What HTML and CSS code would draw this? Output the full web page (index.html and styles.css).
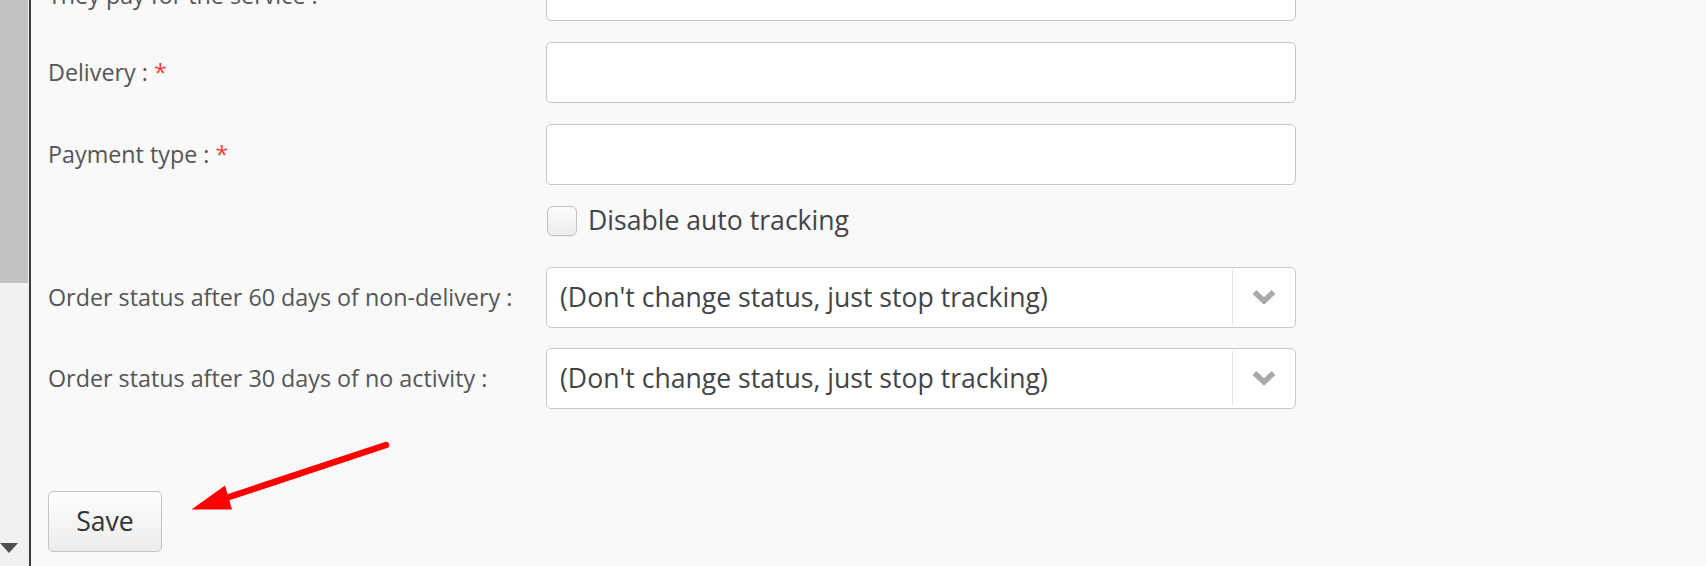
FILE: index.html
```html
<!DOCTYPE html>
<html lang="en">
<head>
<meta charset="utf-8">
<title>Tracking settings</title>
<link rel="stylesheet" href="styles.css">
</head>
<body>
<div class="page">
  <div class="scrollbar">
    <div class="thumb"></div>
    <div class="track"></div>
    <div class="down-arrow"></div>
  </div>
  <main class="content">
    <form class="form">
      <div class="row">
        <label class="label label-first">They pay for the service :</label>
        <input class="field" type="text">
      </div>
      <div class="row">
        <label class="label">Delivery : <span class="req">*</span></label>
        <input class="field" type="text">
      </div>
      <div class="row">
        <label class="label">Payment type : <span class="req">*</span></label>
        <input class="field" type="text">
      </div>
      <div class="row check-row">
        <span class="checkbox"></span>
        <span class="check-label">Disable auto tracking</span>
      </div>
      <div class="row select-row">
        <label class="label">Order status after 60 days of non-delivery :</label>
        <div class="select">
          <span class="select-text">(Don't change status, just stop tracking)</span>
          <span class="select-btn"><svg width="24" height="16" viewBox="0 0 24 16"><polyline points="2.5,3 12,12 21.5,3" fill="none" stroke="#a9a9a9" stroke-width="5.5"/></svg></span>
        </div>
      </div>
      <div class="row select-row">
        <label class="label">Order status after 30 days of no activity :</label>
        <div class="select">
          <span class="select-text">(Don't change status, just stop tracking)</span>
          <span class="select-btn"><svg width="24" height="16" viewBox="0 0 24 16"><polyline points="2.5,3 12,12 21.5,3" fill="none" stroke="#a9a9a9" stroke-width="5.5"/></svg></span>
        </div>
      </div>
      <div class="actions">
        <button class="save" type="button">Save</button>
      </div>
    </form>
  </main>
  <svg class="annotation" width="1706" height="566" viewBox="0 0 1706 566">
    <line x1="386" y1="445" x2="226" y2="498" stroke="#ff0000" stroke-width="6.5" stroke-linecap="round"/>
    <polygon points="191.5,509.5 225,485.5 232,509.5" fill="#ff0000"/>
  </svg>
</div>
</body>
</html>
```
FILE: styles.css
```css
html, body {
  margin: 0;
  padding: 0;
}
body {
  background: #f9f9f9;
  font-family: "Open Sans", "DejaVu Sans", sans-serif;
  overflow: hidden;
}
.page {
  position: relative;
  display: flex;
  height: 566px;
  width: 1706px;
  overflow: hidden;
}
.scrollbar {
  width: 29px;
  flex: none;
  display: flex;
  flex-direction: column;
  background: #f1f1f1;
  border-right: 2px solid #3a3a3a;
}
.thumb {
  height: 283px;
  width: 28px;
  background: #c1c1c1;
}
.track {
  flex: 1;
}
.down-arrow {
  width: 0;
  height: 0;
  margin: 0 0 13px 0;
  border-left: 9.5px solid transparent;
  border-right: 9.5px solid transparent;
  border-top: 10px solid #505050;
}
.content {
  flex: 1;
  padding-left: 17px;
}
.form {
  margin: -40px 0 0 0;
  display: flex;
  flex-direction: column;
}
.row {
  display: flex;
  align-items: center;
  margin-bottom: 21px;
}
.label {
  width: 498px;
  flex: none;
  font-size: 23.3px;
  color: #555;
  line-height: 1.3;
}
.label-first {
  padding-top: 10px;
}
.req {
  color: #ef3f35;
}
.field {
  width: 750px;
  height: 61px;
  box-sizing: border-box;
  border: 1px solid #c6c6c6;
  border-radius: 5px;
  background: #fff;
  margin: 0;
  padding: 0 14px;
  font-family: inherit;
  font-size: 26.6px;
}
.check-row {
  padding-left: 499px;
  margin-top: -1px;
  margin-bottom: 30px;
}
.checkbox {
  width: 30px;
  height: 30px;
  box-sizing: border-box;
  border: 1px solid #c2c2c2;
  border-radius: 6px;
  background: linear-gradient(#fbfbfb, #ececec);
  box-shadow: 0 1px 1px rgba(0,0,0,0.06);
  flex: none;
}
.check-label {
  margin-left: 11px;
  font-size: 26.6px;
  color: #444;
  line-height: 1.2;
}
.select-row {
  margin-bottom: 20px;
}
.select {
  width: 750px;
  height: 61px;
  box-sizing: border-box;
  border: 1px solid #c9c9c9;
  border-radius: 5px;
  background: #fff;
  display: flex;
  align-items: stretch;
}
.select-text {
  flex: 1;
  display: flex;
  align-items: center;
  padding-left: 13px;
  font-size: 26.6px;
  color: #444;
}
.select-btn {
  width: 62px;
  margin: 2px 0;
  border-left: 1px solid #e3e3e3;
  display: flex;
  align-items: center;
  justify-content: center;
}
.actions {
  margin-top: 62px;
  margin-left: 0;
}
.save {
  width: 114px;
  height: 61px;
  box-sizing: border-box;
  border: 1px solid #c4c4c4;
  border-radius: 5px;
  background: linear-gradient(#fdfdfd, #ececec);
  font-family: inherit;
  font-size: 26.6px;
  color: #333;
  padding: 0;
  margin-left: 0;
}
.annotation {
  position: absolute;
  left: 0;
  top: 0;
  pointer-events: none;
}
```
